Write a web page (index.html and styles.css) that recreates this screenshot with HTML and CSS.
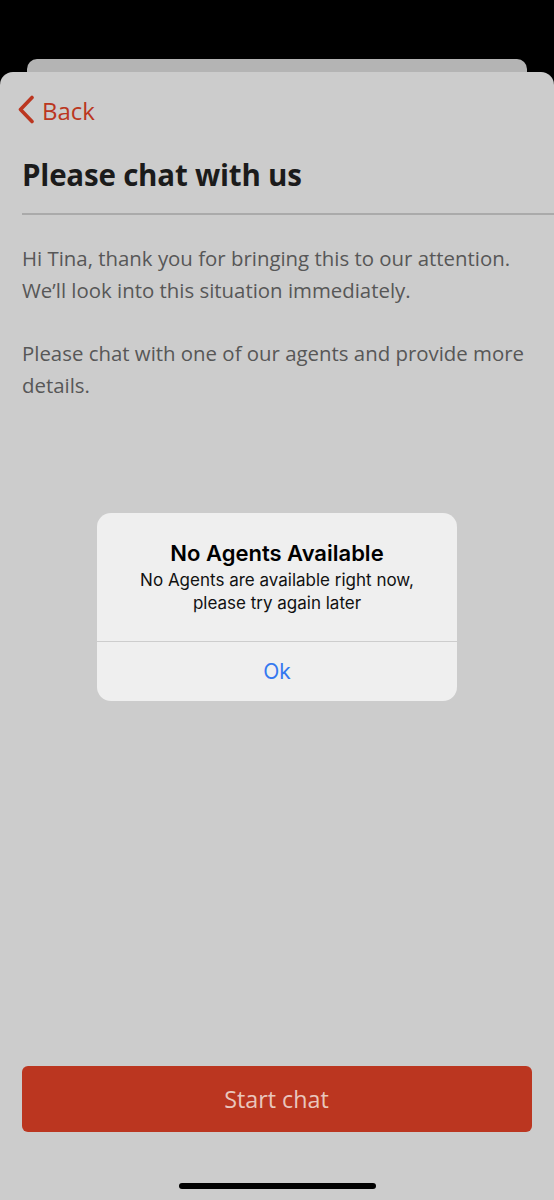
FILE: index.html
```html
<!DOCTYPE html>
<html lang="en">
<head>
  <meta charset="UTF-8">
  <meta name="viewport" content="width=device-width, initial-scale=1.0">
  <title>Please chat with us</title>
  <link rel="stylesheet" href="styles.css">
</head>
<body>
  <div class="stack-card"></div>
  <div class="sheet">
    <div class="nav">
      <svg class="chevron" width="18" height="30" viewBox="0 0 18 30">
        <polyline points="15,2.5 3.5,14.5 15,26.5" fill="none" stroke="#bb3620" stroke-width="3.6" stroke-linecap="round" stroke-linejoin="round"/>
      </svg>
      <span class="back-label">Back</span>
    </div>

    <h1 class="title">Please chat with us</h1>
    <div class="divider"></div>

    <div class="copy">
      <p>Hi Tina, thank you for bringing this to our attention. We’ll look into this situation immediately.</p>
      <p>Please chat with one of our agents and provide more details.</p>
    </div>

    <div class="footer">
      <button class="start-chat">Start chat</button>
      <div class="home-indicator"></div>
    </div>
  </div>

  <div class="alert">
    <div class="alert-body">
      <div class="alert-title">No Agents Available</div>
      <div class="alert-message">No Agents are available right now,<br>please try again later</div>
    </div>
    <button class="alert-action">Ok</button>
  </div>
</body>
</html>
```

FILE: styles.css
```css
body {
  margin: 0;
  background: #000;
  font-family: "Open Sans", "Noto Sans", sans-serif;
  width: 554px;
  height: 1200px;
  overflow: hidden;
}
.stack-card {
  margin: 59px 27px 0 27px;
  height: 13px;
  background: #b4b4b4;
  border-radius: 10px 10px 0 0;
}
.sheet {
  height: 1128px;
  background: #cccccc;
  border-radius: 13px 13px 0 0;
  display: flex;
  flex-direction: column;
  padding-left: 22px;
  box-sizing: border-box;
}
.nav {
  height: 76px;
  display: flex;
  align-items: center;
  margin-left: -5px;
  gap: 7px;
}
.back-label {
  color: #bb3620;
  font-size: 24px;
}
.title {
  margin: 7px 0 0 0;
  font-size: 29.5px;
  line-height: 40px;
  font-weight: bold;
  color: #1b1b1b;
  letter-spacing: -0.2px;
}
.divider {
  margin-top: 18px;
  height: 2px;
  background: #aaaaaa;
}
.copy {
  margin-top: 27px;
  padding-right: 22px;
  color: #575757;
  font-size: 20.4px;
  line-height: 32px;
}
.copy p {
  margin: 0 0 31px 0;
}
.footer {
  margin-top: auto;
  padding-right: 22px;
  display: flex;
  flex-direction: column;
  align-items: center;
}
.start-chat {
  width: 100%;
  height: 66px;
  margin-left: -1px;
  border: none;
  border-radius: 6px;
  background: #bb3620;
  color: #e9c6bd;
  font-family: "Open Sans", "Noto Sans", sans-serif;
  font-size: 23.3px;
}
.home-indicator {
  margin: 51px 0 11px 0;
  width: 197px;
  height: 6px;
  border-radius: 3px;
  background: #000;
}
.alert {
  position: absolute;
  top: 513px;
  left: 97px;
  width: 360px;
  border-radius: 14px;
  background: #efefef;
  font-family: Inter, "Liberation Sans", sans-serif;
  text-align: center;
  overflow: hidden;
}
.alert-body {
  padding: 27px 16px 26px;
  border-bottom: 1px solid #cdcdcd;
}
.alert-title {
  font-size: 22px;
  line-height: 26px;
  font-weight: 600;
  color: #000;
  margin-bottom: 3px;
}
.alert-message {
  font-size: 17px;
  line-height: 23px;
  color: #111;
}
.alert-action {
  display: block;
  width: 100%;
  height: 59px;
  border: none;
  background: none;
  color: #3478f0;
  font-family: Inter, "Liberation Sans", sans-serif;
  font-size: 21px;
}
```
